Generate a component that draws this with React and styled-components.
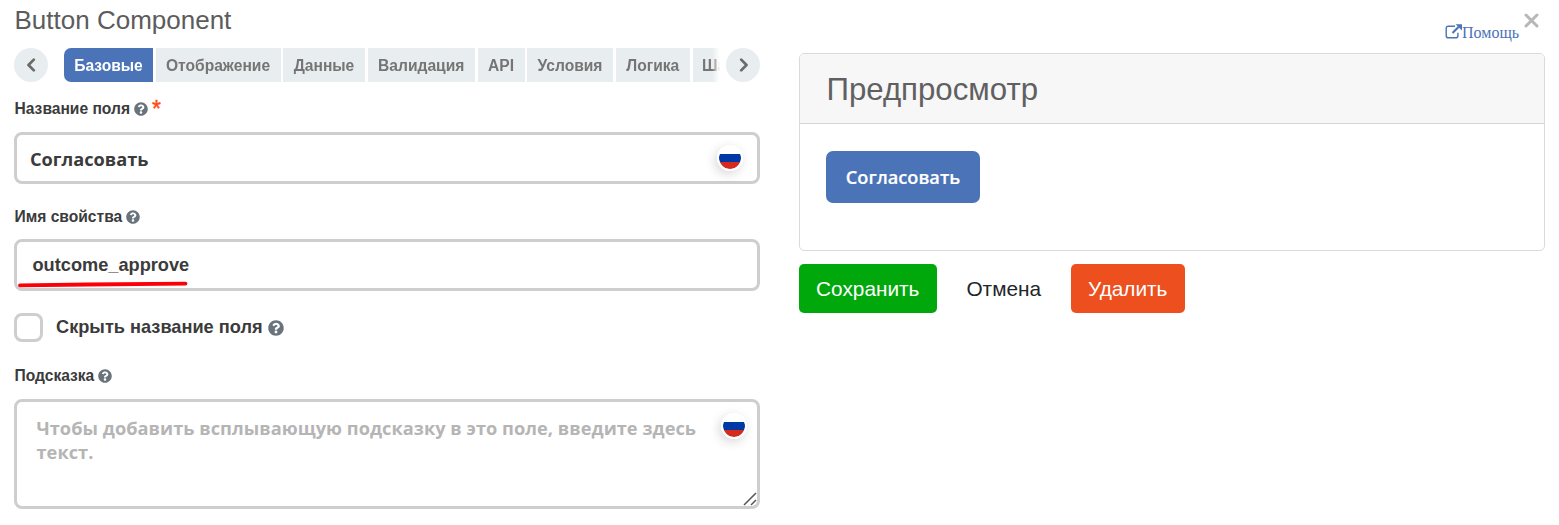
import React from "react";
import styled, { createGlobalStyle } from "styled-components";
import { FaQuestionCircle } from "react-icons/fa";

const Global = createGlobalStyle`
  * { box-sizing: border-box; }
  body {
    margin: 0;
    background: #fff;
    color: #3b3b3b;
    font-family: "Liberation Sans", Arial, sans-serif;
  }
`;

const Dialog = styled.main`
  display: grid;
  grid-template-columns: 746px 746px;
  column-gap: 39px;
  width: 1559px;
  height: 525px;
  padding-left: 14px;
  overflow: hidden;
`;

const Column = styled.section`
  display: flex;
  flex-direction: column;
`;

const Title = styled.h1`
  margin: 0;
  height: 48px;
  padding: 5px 0 0 0.5px;
  font-size: 26px;
  font-weight: 400;
  line-height: 30px;
  color: #5c5c5c;
`;

const TabBar = styled.nav`
  display: flex;
  height: 34px;
`;

const RoundButton = styled.button`
  flex: none;
  display: flex;
  align-items: center;
  justify-content: center;
  width: 34px;
  height: 34px;
  padding: 0;
  border: 0;
  border-radius: 50%;
  background: #e8edef;
  color: #6b6b6b;
`;

const TabStrip = styled.div`
  flex: 1;
  display: flex;
  gap: 2.5px;
  margin: 0 6px 0 16px;
  overflow: hidden;
  mask-image: linear-gradient(to right, #000 calc(100% - 8px), transparent);
`;

const Tab = styled.button`
  flex: none;
  width: ${(p) => p.$width}px;
  padding: 1px 0 0;
  border: 0;
  border-radius: ${(p) => (p.$active ? "7px 0 0 7px" : "0")};
  background: ${(p) => (p.$active ? "#4b73b7" : "#e8edef")};
  color: ${(p) => (p.$active ? "#fff" : "#757575")};
  font: bold 15.6px "Liberation Sans", Arial, sans-serif;
  white-space: nowrap;
`;

const Label = styled.label`
  display: flex;
  align-items: center;
  height: 20px;
  margin-top: ${(p) => p.$top}px;
  padding-left: 0.5px;
  font-size: 15.6px;
  font-weight: 700;
  line-height: 20px;
  color: #3b3b3b;
`;

const HelpIcon = styled(FaQuestionCircle)`
  flex: none;
  width: ${(p) => p.$size || 14}px;
  height: ${(p) => p.$size || 14}px;
  margin-left: ${(p) => (p.$size ? 5 : 3.6)}px;
  color: #69737c;
`;

const Required = styled.span`
  margin-left: 4.5px;
  font-size: 23px;
  font-weight: 400;
  color: #ff4a14;
  -webkit-text-stroke: 0.4px #ff4a14;
`;

const Field = styled.div`
  position: relative;
  display: flex;
  align-items: center;
  height: 52px;
  margin-top: ${(p) => p.$top}px;
  padding: 0 14.5px 0 ${(p) => p.$left}px;
  border: 3px solid #cecece;
  border-radius: 8px;
  font-size: 18.2px;
  font-weight: 700;
  font-family: ${(p) => (p.$open ? '"Open Sans", sans-serif' : "inherit")};
`;

const FieldText = styled.span`
  flex: 1;
  padding-top: ${(p) => p.$drop || 0}px;
  line-height: 24px;
`;

const Flag = styled.span`
  flex: none;
  width: 26px;
  height: 26px;
  border: 2px solid #fff;
  border-radius: 50%;
  background: linear-gradient(#fff 0 31%, #0039a6 31% 69%, #d52b1e 69%) padding-box;
  box-shadow: -2px 3px 11px rgba(0, 0, 0, 0.16);
`;

const Underline = styled.svg`
  position: absolute;
  left: 0;
  top: 36.5px;
  width: 176px;
  height: 10px;
  overflow: visible;
`;

const CheckRow = styled.label`
  display: flex;
  align-items: center;
  height: 29px;
  margin-top: 22px;
  font-size: 18.2px;
  font-weight: 700;
`;

const Checkbox = styled.span`
  width: 29px;
  height: 29px;
  margin-right: 13px;
  border: 3px solid #cecece;
  border-radius: 8px;
`;

const TextArea = styled.div`
  position: relative;
  display: flex;
  justify-content: space-between;
  height: 110.5px;
  margin-top: 12.5px;
  padding: 11.5px 10px 0 19.5px;
  border: 3px solid #cecece;
  border-radius: 8px;
  font: bold 18.2px/24px "Open Sans", sans-serif;
  letter-spacing: 0.035px;
  color: #b5b5b5;
`;

const Placeholder = styled.span`
  width: 672px;
  padding-top: 2.6px;
`;

const Grip = styled.svg`
  position: absolute;
  right: 0;
  bottom: 0;
  width: 14px;
  height: 14px;
`;

const TopLinks = styled.div`
  display: flex;
  justify-content: flex-end;
  height: 53.4px;
  padding-right: 6px;
`;

const HelpLink = styled.a`
  display: flex;
  height: 20px;
  margin-top: 23px;
  font: 16px/20px "Liberation Serif", "Times New Roman", serif;
  color: #4b73b7;
`;

const Close = styled.svg`
  width: 15px;
  height: 15px;
  margin: 13px 0 0 5px;
`;

const Card = styled.div`
  height: 197.4px;
  border: 1px solid #dadada;
  border-radius: 5px;
  overflow: hidden;
`;

const CardHeader = styled.h2`
  height: 70px;
  margin: 0;
  padding: 17.6px 26.5px 0;
  border-bottom: 1px solid #d4d4d4;
  background: #f7f7f7;
  font-size: 31.2px;
  font-weight: 400;
  line-height: 36px;
  color: #606060;
`;

const CardBody = styled.div`
  padding: 26.2px 26px;
`;

const PreviewButton = styled.button`
  width: 154px;
  height: 52px;
  padding: 0;
  border: 0;
  border-radius: 7px;
  background: #4b73b7;
  color: #fff;
  font: 600 18.2px "Open Sans", sans-serif;
  -webkit-text-stroke: 0.2px #fff;
`;

const Actions = styled.div`
  display: flex;
  margin-top: 13px;
`;

const ActionButton = styled.button`
  width: ${(p) => p.$width}px;
  height: 49.5px;
  padding: 1px 0 0;
  border: 0;
  border-radius: 5px;
  background: ${(p) => p.$bg || "transparent"};
  color: ${(p) => (p.$bg ? "#fff" : "#212529")};
  font: 20.8px "Liberation Sans", Arial, sans-serif;
`;

const Chevron = ({ right }) => (
  <svg width="10" height="14" viewBox="0 0 10 14" fill="none" stroke="currentColor" strokeWidth="2.7" strokeLinecap="round" strokeLinejoin="round">
    <path d={right ? "M3.2 1.6 8.5 7 3.2 12.4" : "M7.8 1.6 2.5 7l5.3 5.4"} />
  </svg>
);

const ExternalIcon = () => (
  <svg width="17" height="17" viewBox="0 0 17 17" fill="none" stroke="currentColor">
    <path d="M10 3.2H3.3Q1.2 3.2 1.2 5.3v7.4q0 2.1 2.1 2.1h7.5q2.1 0 2.1-2.1V9.7" strokeWidth="1.4" />
    <path d="m7.5 10 6-6" strokeWidth="2.1" />
    <path d="M10.6 1.2H17v6.3z" fill="currentColor" stroke="none" />
  </svg>
);

const tabs = [
  ["Базовые", 89],
  ["Отображение", 125],
  ["Данные", 82],
  ["Валидация", 107.5],
  ["API", 47],
  ["Условия", 86],
  ["Логика", 74.5],
  ["Шаблон", 81],
];

export default function App() {
  return (
    <>
      <Global />
      <Dialog>
        <Column>
          <Title>Button Component</Title>
          <TabBar>
            <RoundButton><Chevron /></RoundButton>
            <TabStrip>
              {tabs.map(([name, width], i) => (
                <Tab key={name} $width={width} $active={i === 0}>{name}</Tab>
              ))}
            </TabStrip>
            <RoundButton><Chevron right /></RoundButton>
          </TabBar>

          <Label $top={17}>Название поля<HelpIcon /><Required>*</Required></Label>
          <Field $top={13} $left={13} $open>
            <FieldText $drop={1}>Согласовать</FieldText>
            <Flag />
          </Field>

          <Label $top={23}>Имя свойства<HelpIcon /></Label>
          <Field $top={12} $left={15.5}>
            <FieldText>outcome_approve</FieldText>
            <Underline>
              <path d="M3 6.3 70 5.5l98.5-.9" fill="none" stroke="#fb0007" strokeWidth="3.8" strokeLinecap="round" />
            </Underline>
          </Field>

          <CheckRow><Checkbox />Скрыть название поля<HelpIcon $size={16} /></CheckRow>

          <Label $top={24}>Подсказка<HelpIcon /></Label>
          <TextArea>
            <Placeholder>Чтобы добавить всплывающую подсказку в это поле, введите здесь текст.</Placeholder>
            <Flag />
            <Grip viewBox="0 0 14 14" fill="none" stroke="#555" strokeWidth="1.5">
              <path d="M1 13 13 1M8 13l5-5" />
            </Grip>
          </TextArea>
        </Column>

        <Column>
          <TopLinks>
            <HelpLink><ExternalIcon />Помощь</HelpLink>
            <Close viewBox="0 0 15 15" stroke="#b7b7b7" strokeWidth="3" strokeLinecap="round">
              <path d="m2 2 11 11M13 2 2 13" />
            </Close>
          </TopLinks>
          <Card>
            <CardHeader>Предпросмотр</CardHeader>
            <CardBody><PreviewButton>Согласовать</PreviewButton></CardBody>
          </Card>
          <Actions>
            <ActionButton $width={137.5} $bg="#00a80c">Сохранить</ActionButton>
            <ActionButton $width={134.5}>Отмена</ActionButton>
            <ActionButton $width={113.5} $bg="#ed4f1f">Удалить</ActionButton>
          </Actions>
        </Column>
      </Dialog>
    </>
  );
}
